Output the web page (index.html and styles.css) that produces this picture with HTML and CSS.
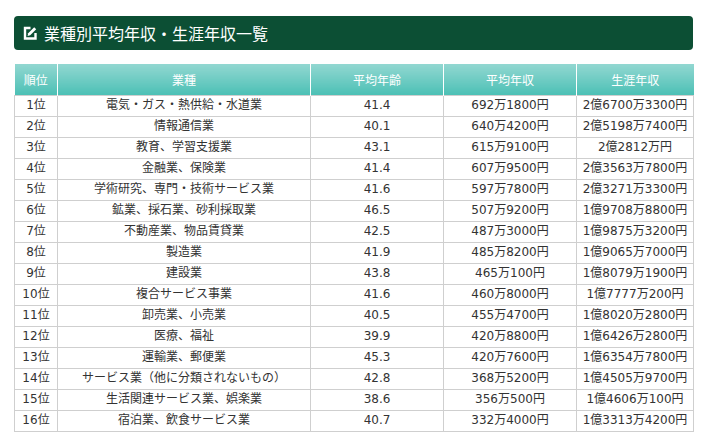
FILE: index.html
```html
<!DOCTYPE html>
<html lang="ja">
<head>
<meta charset="utf-8">
<link rel="stylesheet" href="styles.css">
</head>
<body>
<div class="wrap">
  <h2 class="title">
    <svg class="icon" width="14" height="14" viewBox="0 0 14 14">
      <path d="M7.5 2H2V12.5H12.5V7" fill="none" stroke="#fff" stroke-width="2.4"/>
      <path d="M4.6 10 L5.2 7.3 L11.2 1.3 L13.2 3.3 L7.2 9.3 Z" fill="#fff"/>
    </svg>
    業種別平均年収・生涯年収一覧
  </h2>
  <table class="tbl">
    <colgroup>
      <col class="c1"><col class="c2"><col class="c3"><col class="c4"><col class="c5">
    </colgroup>
    <thead>
      <tr><th>順位</th><th>業種</th><th>平均年齢</th><th>平均年収</th><th>生涯年収</th></tr>
    </thead>
    <tbody>
      <tr><td>1位</td><td>電気・ガス・熱供給・水道業</td><td>41.4</td><td>692万1800円</td><td>2億6700万3300円</td></tr>
      <tr><td>2位</td><td>情報通信業</td><td>40.1</td><td>640万4200円</td><td>2億5198万7400円</td></tr>
      <tr><td>3位</td><td>教育、学習支援業</td><td>43.1</td><td>615万9100円</td><td>2億2812万円</td></tr>
      <tr><td>4位</td><td>金融業、保険業</td><td>41.4</td><td>607万9500円</td><td>2億3563万7800円</td></tr>
      <tr><td>5位</td><td>学術研究、専門・技術サービス業</td><td>41.6</td><td>597万7800円</td><td>2億3271万3300円</td></tr>
      <tr><td>6位</td><td>鉱業、採石業、砂利採取業</td><td>46.5</td><td>507万9200円</td><td>1億9708万8800円</td></tr>
      <tr><td>7位</td><td>不動産業、物品賃貸業</td><td>42.5</td><td>487万3000円</td><td>1億9875万3200円</td></tr>
      <tr><td>8位</td><td>製造業</td><td>41.9</td><td>485万8200円</td><td>1億9065万7000円</td></tr>
      <tr><td>9位</td><td>建設業</td><td>43.8</td><td>465万100円</td><td>1億8079万1900円</td></tr>
      <tr><td>10位</td><td>複合サービス事業</td><td>41.6</td><td>460万8000円</td><td>1億7777万200円</td></tr>
      <tr><td>11位</td><td>卸売業、小売業</td><td>40.5</td><td>455万4700円</td><td>1億8020万2800円</td></tr>
      <tr><td>12位</td><td>医療、福祉</td><td>39.9</td><td>420万8800円</td><td>1億6426万2800円</td></tr>
      <tr><td>13位</td><td>運輸業、郵便業</td><td>45.3</td><td>420万7600円</td><td>1億6354万7800円</td></tr>
      <tr><td>14位</td><td>サービス業（他に分類されないもの）</td><td>42.8</td><td>368万5200円</td><td>1億4505万9700円</td></tr>
      <tr><td>15位</td><td>生活関連サービス業、娯楽業</td><td>38.6</td><td>356万500円</td><td>1億4606万100円</td></tr>
      <tr><td>16位</td><td>宿泊業、飲食サービス業</td><td>40.7</td><td>332万4000円</td><td>1億3313万4200円</td></tr>
    </tbody>
  </table>
</div>
</body>
</html>
```

FILE: styles.css
```css
html, body {
  margin: 0;
  padding: 0;
  background: #fff;
}
.wrap {
  padding: 16px 12px 0 14px;
  font-family: "DejaVu Sans", "Noto Sans CJK JP", sans-serif;
}
.title {
  margin: 0;
  height: 34px;
  box-sizing: border-box;
  background: #0c4f34;
  border-radius: 4px;
  color: #fff;
  font-family: "Noto Sans CJK JP", sans-serif;
  font-size: 16px;
  font-weight: normal;
  display: flex;
  align-items: center;
  gap: 7px;
  padding-left: 9px;
  line-height: 1;
}
.icon {
  flex: none;
  margin-top: -1px;
}
.tbl {
  margin-top: 14px;
  width: 679px;
  border-collapse: collapse;
  table-layout: fixed;
  font-size: 12px;
  color: #333;
}
.c1 { width: 43px; }
.c2 { width: 253px; }
.c3 { width: 133px; }
.c4 { width: 133px; }
.c5 { width: 117px; }
.tbl th {
  height: 31px;
  padding: 0;
  box-sizing: border-box;
  background: linear-gradient(to bottom, #92d7d1 0%, #4cc0b5 100%);
  color: #fff;
  font-weight: normal;
  text-align: center;
  border-left: 1px solid #fff;
  border-right: 1px solid #fff;
}
.tbl th:first-child { border-left: none; }
.tbl th:last-child { border-right: none; }
.tbl td {
  height: 21px;
  padding: 0;
  box-sizing: border-box;
  text-align: center;
  border: 1px solid #cfcfcf;
  line-height: 19px;
  white-space: nowrap;
}
```
